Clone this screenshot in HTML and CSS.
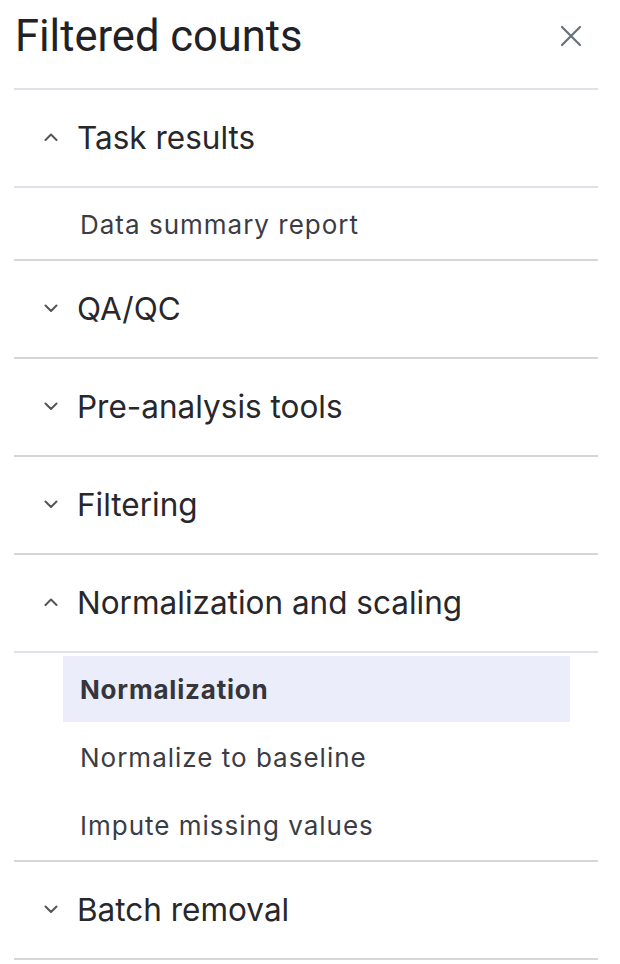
FILE: index.html
```html
<!DOCTYPE html>
<html lang="en">
<head>
    <meta charset="UTF-8">
    <meta name="viewport" content="width=device-width, initial-scale=1.0">
    <title>Filtered counts</title>
    <link rel="stylesheet" href="styles.css">
</head>
<body>
    <div class="panel">
        <div class="panel-header">
            <h1>Filtered counts</h1>
            <button class="close-btn" aria-label="Close">
                <svg width="22" height="22" viewBox="0 0 22 22"><path d="M2 2L20 20M20 2L2 20" stroke="#687078" stroke-width="2.2" stroke-linecap="round"/></svg>
            </button>
        </div>

        <!-- Task results -->
        <div class="section open">
            <div class="section-head">
                <svg class="chevron" width="14" height="8" viewBox="0 0 14 8"><path d="M1.5 7L7 1.5L12.5 7" fill="none" stroke="#555" stroke-width="2" stroke-linecap="round" stroke-linejoin="round"/></svg>
                <span>Task results</span>
            </div>
            <div class="section-body">
                <div class="item">Data summary report</div>
            </div>
        </div>

        <div class="section">
            <div class="section-head">
                <svg class="chevron" width="14" height="8" viewBox="0 0 14 8"><path d="M1.5 1.5L7 7L12.5 1.5" fill="none" stroke="#555" stroke-width="2" stroke-linecap="round" stroke-linejoin="round"/></svg>
                <span>QA/QC</span>
            </div>
        </div>

        <div class="section">
            <div class="section-head">
                <svg class="chevron" width="14" height="8" viewBox="0 0 14 8"><path d="M1.5 1.5L7 7L12.5 1.5" fill="none" stroke="#555" stroke-width="2" stroke-linecap="round" stroke-linejoin="round"/></svg>
                <span>Pre-analysis tools</span>
            </div>
        </div>

        <div class="section">
            <div class="section-head">
                <svg class="chevron" width="14" height="8" viewBox="0 0 14 8"><path d="M1.5 1.5L7 7L12.5 1.5" fill="none" stroke="#555" stroke-width="2" stroke-linecap="round" stroke-linejoin="round"/></svg>
                <span>Filtering</span>
            </div>
        </div>

        <!-- Normalization -->
        <div class="section open">
            <div class="section-head">
                <svg class="chevron" width="14" height="8" viewBox="0 0 14 8"><path d="M1.5 7L7 1.5L12.5 7" fill="none" stroke="#555" stroke-width="2" stroke-linecap="round" stroke-linejoin="round"/></svg>
                <span>Normalization and scaling</span>
            </div>
            <div class="section-body">
                <div class="item active">Normalization</div>
                <div class="item">Normalize to baseline</div>
                <div class="item">Impute missing values</div>
            </div>
        </div>

        <div class="section">
            <div class="section-head">
                <svg class="chevron" width="14" height="8" viewBox="0 0 14 8"><path d="M1.5 1.5L7 7L12.5 1.5" fill="none" stroke="#555" stroke-width="2" stroke-linecap="round" stroke-linejoin="round"/></svg>
                <span>Batch removal</span>
            </div>
        </div>
    </div>
</body>
</html>
```

FILE: styles.css
```css
* {
    margin: 0;
    padding: 0;
    box-sizing: border-box;
}

body {
    background: #ffffff;
    font-family: Inter, 'Noto Sans', sans-serif;
    color: #26262b;
}

.panel {
    margin: 0 22px 0 14px;
}

.panel-header {
    height: 90px;
    display: flex;
    align-items: center;
    justify-content: space-between;
    padding: 0 16px 16px 1px;
    border-bottom: 2px solid #dee2e7;
}

.panel-header h1 {
    font-family: Roboto, 'Noto Sans', sans-serif;
    font-weight: 400;
    font-size: 43.5px;
    color: #222226;
}

.close-btn {
    background: none;
    border: none;
    display: flex;
    cursor: pointer;
}

.section {
    border-bottom: 2px solid #d6d6d6;
}

.section-head {
    height: 96px;
    display: flex;
    align-items: center;
    padding-left: 30px;
    padding-bottom: 2px;
    font-size: 31.5px;
    color: #27272c;
}

.chevron {
    margin-right: 19px;
}

.section.open .section-head {
    border-bottom: 2px solid #dee2e7;
    height: 98px;
}

.section-body {
    display: flex;
    flex-direction: column;
    padding: 2px 28px 1px 49px;
}

.item {
    height: 66px;
    margin: 1px 0;
    display: flex;
    align-items: center;
    padding-left: 17px;
    font-size: 26px;
    letter-spacing: 1px;
    color: #3c3c44;
}

.item.active {
    background: #ebedfa;
    font-weight: 700;
    letter-spacing: 0.8px;
    color: #35353c;
}
```
